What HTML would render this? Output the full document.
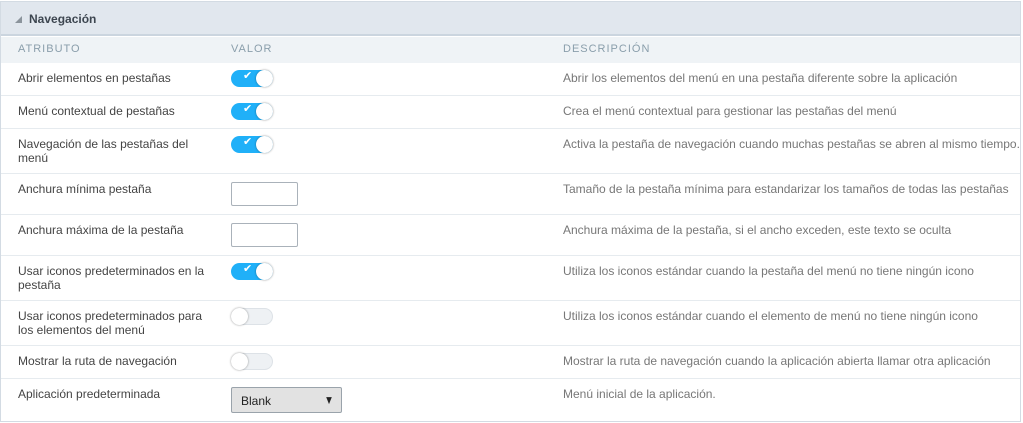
<!DOCTYPE html>
<html><head><meta charset="utf-8"><style>
*{margin:0;padding:0;box-sizing:border-box}
body{width:1023px;height:423px;background:#fff;font-family:"Liberation Sans",sans-serif;position:relative;overflow:hidden}
.box{position:absolute;left:0;top:1px;width:1021px;height:421px;border:1px solid #d3dbe3}
.hd{position:absolute;left:1px;top:2px;width:1019px;height:34px;background:#e1e7ee;border-bottom:2px solid #cbd5df}
.hd span{position:absolute;left:28px;top:10px;font-size:12px;font-weight:bold;color:#3d4650}
.tri{position:absolute;left:14px;top:14px;width:0;height:0;border-left:7px solid transparent;border-bottom:7px solid #8b949c}
.ch{position:absolute;left:1px;top:37px;width:1019px;height:26px;background:#eff3f6}
.ch div{position:absolute;top:6px;font-size:11px;letter-spacing:1px;color:#8a9eab}
.row{position:absolute;left:1px;width:1019px;border-bottom:1px solid #e6ebef}
.a,.d{position:absolute;font-size:12px;line-height:14px;top:8px}
.a{left:17px;color:#444;width:200px}
.d{left:562px;color:#777;white-space:nowrap}
.tg{position:absolute;left:230px;top:7px;width:42px;height:17px;border-radius:9px;background:#20b0f8}
.tg::after{content:"";position:absolute;right:0;top:0;width:17px;height:17px;border-radius:50%;background:#fff;box-shadow:0 0 2px rgba(0,0,0,.4)}
.tg i{position:absolute;left:12px;top:-1px;color:#fff;font-style:normal;font-size:11px}
.tg.off{background:#eef1f4;border:1px solid #dde2e7}
.tg.off::after{left:-1px;top:-1px;right:auto}
.in{position:absolute;left:230px;top:8px;width:67px;height:24px;border:1px solid #aab2ba;border-radius:2px;background:#fff}
.sel{position:absolute;left:230px;top:8px;width:111px;height:26px;border:1px solid #9aa3ab;border-radius:2px;background:#e2e2e2;font-size:12px;color:#222;padding:6px 0 0 9px}
.sel b{position:absolute;right:6px;top:5px;font-size:12px;transform:scaleX(.8)}
</style></head><body>
<div class="box"></div>
<div class="hd"><div class="tri"></div><span>Navegación</span></div>
<div class="ch"><div style="left:17px">ATRIBUTO</div><div style="left:230px">VALOR</div><div style="left:562px">DESCRIPCIÓN</div></div>

<div class="row" style="top:63px;height:33px"><div class="a">Abrir elementos en pestañas</div><div class="tg"><i>✔</i></div><div class="d">Abrir los elementos del menú en una pestaña diferente sobre la aplicación</div></div>
<div class="row" style="top:96px;height:33px"><div class="a">Menú contextual de pestañas</div><div class="tg"><i>✔</i></div><div class="d">Crea el menú contextual para gestionar las pestañas del menú</div></div>
<div class="row" style="top:129px;height:45px"><div class="a">Navegación de las pestañas del menú</div><div class="tg"><i>✔</i></div><div class="d">Activa la pestaña de navegación cuando muchas pestañas se abren al mismo tiempo.</div></div>
<div class="row" style="top:174px;height:41px"><div class="a">Anchura mínima pestaña</div><div class="in"></div><div class="d">Tamaño de la pestaña mínima para estandarizar los tamaños de todas las pestañas</div></div>
<div class="row" style="top:215px;height:41px"><div class="a">Anchura máxima de la pestaña</div><div class="in"></div><div class="d">Anchura máxima de la pestaña, si el ancho exceden, este texto se oculta</div></div>
<div class="row" style="top:256px;height:45px"><div class="a">Usar iconos predeterminados en la pestaña</div><div class="tg"><i>✔</i></div><div class="d">Utiliza los iconos estándar cuando la pestaña del menú no tiene ningún icono</div></div>
<div class="row" style="top:301px;height:45px"><div class="a">Usar iconos predeterminados para los elementos del menú</div><div class="tg off"></div><div class="d">Utiliza los iconos estándar cuando el elemento de menú no tiene ningún icono</div></div>
<div class="row" style="top:346px;height:33px"><div class="a">Mostrar la ruta de navegación</div><div class="tg off"></div><div class="d">Mostrar la ruta de navegación cuando la aplicación abierta llamar otra aplicación</div></div>
<div class="row" style="top:379px;height:43px;border-bottom:none"><div class="a">Aplicación predeterminada</div><div class="sel">Blank<b>▼</b></div><div class="d">Menú inicial de la aplicación.</div></div>
</body></html>
